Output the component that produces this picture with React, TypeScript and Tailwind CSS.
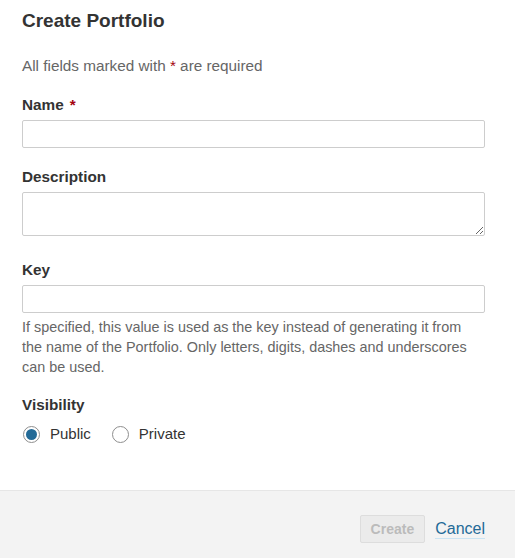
import { useState } from "react";

/* Create Portfolio modal — form body plus footer actions */

function Radio({
  checked,
  label,
  onClick,
}: {
  checked: boolean;
  label: string;
  onClick: () => void;
}) {
  return (
    <button
      type="button"
      onClick={onClick}
      className="flex items-center gap-[10px] text-[15px] leading-[20px] text-[#333]"
    >
      <span className="flex h-[17px] w-[17px] items-center justify-center rounded-full border border-[#8e8e8e] bg-white">
        {checked && <span className="h-[11px] w-[11px] rounded-full bg-[#236a97]" />}
      </span>
      <span>{label}</span>
    </button>
  );
}

export default function App() {
  const [visibility, setVisibility] = useState<"public" | "private">("public");

  const inputCls =
    "block h-[28px] w-full rounded-[2px] border border-[#cdcdcd] bg-white px-2 text-[15px] outline-none";

  return (
    <div
      className="flex h-[558px] w-[515px] flex-col overflow-hidden bg-white text-[#333]"
      style={{ fontFamily: '"Liberation Sans", Arial, sans-serif' }}
    >
      {/* Header */}
      <h2 className="pl-[22px] pt-[9px] text-[19px] font-bold leading-[24px]">
        Create Portfolio
      </h2>

      {/* Body */}
      <div className="flex flex-col pl-[22px] pr-[30px] pt-[23px]">
        <p className="text-[15.3px] leading-[20px] text-[#666]">
          All fields marked with <span className="text-[#a4030f]">*</span> are required
        </p>

        <div className="mt-[19px]">
          <label className="block text-[15.3px] font-bold leading-[20px]">
            Name
            <span className="ml-[6px] text-[#a4030f]">*</span>
          </label>
          <input type="text" className={`mt-[5px] ${inputCls}`} />
        </div>

        <div className="mt-[19px]">
          <label className="block text-[15.3px] font-bold leading-[20px]">Description</label>
          <textarea className="mt-[5px] block h-[44px] w-full rounded-[2px] border border-[#cdcdcd] bg-white px-2 text-[15px] outline-none" />
        </div>

        <div className="mt-[24px]">
          <label className="block text-[15.3px] font-bold leading-[20px]">Key</label>
          <input type="text" className={`mt-[5px] ${inputCls}`} />
          <p className="mt-[4px] pr-[14px] text-[14.4px] leading-[20px] text-[#666]">
            If specified, this value is used as the key instead of generating it from the name
            of the Portfolio. Only letters, digits, dashes and underscores can be used.
          </p>
        </div>

        <div className="mt-[18px]">
          <label className="block text-[15.3px] font-bold leading-[20px]">Visibility</label>
          <div className="mt-[9px] flex items-center gap-[21px] pl-[1px]">
            <Radio
              checked={visibility === "public"}
              label="Public"
              onClick={() => setVisibility("public")}
            />
            <Radio
              checked={visibility === "private"}
              label="Private"
              onClick={() => setVisibility("private")}
            />
          </div>
        </div>
      </div>

      {/* Footer */}
      <div className="mt-auto flex h-[68px] items-start justify-end gap-[10px] border-t border-[#e6e6e6] bg-[#f3f3f3] pr-[30px] pt-[24px]">
        <button
          type="button"
          disabled
          className="h-[28px] rounded-[2px] border border-[#dddddd] bg-[#ebebeb] px-[10px] text-[14px] font-bold text-[#bbbbbb]"
        >
          Create
        </button>
        <a
          href="#"
          className="mt-[4px] border-b border-[#cae3f2] text-[16px] leading-[19px] text-[#236a97]"
        >
          Cancel
        </a>
      </div>
    </div>
  );
}
